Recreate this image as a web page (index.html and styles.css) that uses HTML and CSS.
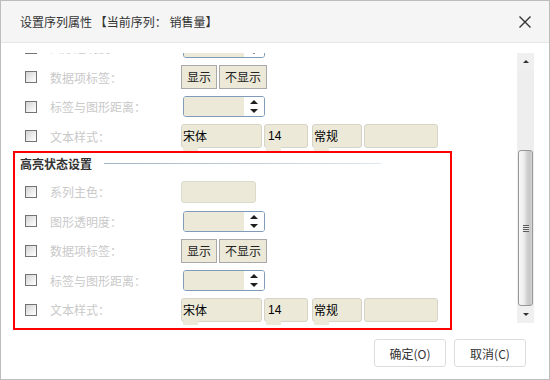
FILE: index.html
```html
<!DOCTYPE html>
<html lang="zh-CN">
<head>
    <meta charset="UTF-8">
    <title>设置序列属性</title>
    <link rel="stylesheet" href="styles.css">
</head>
<body>
    <div class="dialog">
        <div class="dlg-head">
            <span class="dlg-title">设置序列属性 【当前序列： 销售量】</span>
            <svg class="dlg-close" width="14" height="14" viewBox="0 0 14 14">
                <path d="M1.5 1.5 L12.5 12.5 M12.5 1.5 L1.5 12.5" stroke="#333" stroke-width="1.4" fill="none"/>
            </svg>
        </div>

        <div class="dlg-body">
            <div class="viewport">
                <div class="list">
                    <!-- riga tagliata in alto -->
                    <div class="row">
                        <span class="chk"></span>
                        <span class="lbl">图形透明度：</span>
                        <div class="spin"><span class="spin-val"></span><span class="spin-btn"><i class="up"></i><i class="down"></i></span></div>
                    </div>
                    <div class="row">
                        <span class="chk"></span>
                        <span class="lbl">数据项标签：</span>
                        <div class="btns"><span class="tbtn">显示</span><span class="tbtn">不显示</span></div>
                    </div>
                    <div class="row">
                        <span class="chk"></span>
                        <span class="lbl">标签与图形距离：</span>
                        <div class="spin"><span class="spin-val"></span><span class="spin-btn"><i class="up"></i><i class="down"></i></span></div>
                    </div>
                    <div class="row">
                        <span class="chk"></span>
                        <span class="lbl">文本样式：</span>
                        <div class="fonts">
                            <span class="fld f-name tab">宋体</span>
                            <span class="fld f-size tab">14</span>
                            <span class="fld f-style tab">常规</span>
                            <span class="fld f-color"></span>
                        </div>
                    </div>

                    <div class="hl">
                        <div class="hl-title"><span>高亮状态设置</span><i class="hl-line"></i></div>
                        <div class="row">
                            <span class="chk"></span>
                            <span class="lbl">系列主色：</span>
                            <span class="swatch"></span>
                        </div>
                        <div class="row">
                            <span class="chk"></span>
                            <span class="lbl">图形透明度：</span>
                            <div class="spin"><span class="spin-val"></span><span class="spin-btn"><i class="up"></i><i class="down"></i></span></div>
                        </div>
                        <div class="row">
                            <span class="chk"></span>
                            <span class="lbl">数据项标签：</span>
                            <div class="btns"><span class="tbtn">显示</span><span class="tbtn">不显示</span></div>
                        </div>
                        <div class="row">
                            <span class="chk"></span>
                            <span class="lbl">标签与图形距离：</span>
                            <div class="spin"><span class="spin-val"></span><span class="spin-btn"><i class="up"></i><i class="down"></i></span></div>
                        </div>
                        <div class="row">
                            <span class="chk"></span>
                            <span class="lbl">文本样式：</span>
                            <div class="fonts">
                                <span class="fld f-name tab">宋体</span>
                                <span class="fld f-size tab">14</span>
                                <span class="fld f-style tab">常规</span>
                                <span class="fld f-color"></span>
                            </div>
                        </div>
                    </div>
                </div>
            </div>

            <div class="vscroll">
                <div class="sb-arrow"><i class="up"></i></div>
                <div class="sb-track">
                    <div class="sb-thumb"><span class="grip"></span></div>
                </div>
                <div class="sb-arrow"><i class="down"></i></div>
            </div>
        </div>

        <div class="dlg-foot">
            <button class="btn">确定(O)</button>
            <button class="btn">取消(C)</button>
        </div>
    </div>
</body>
</html>
```

FILE: styles.css
```css
html, body {
    margin: 0;
    padding: 0;
    background: #fff;
}
body {
    font-family: "Noto Sans CJK SC", "Liberation Sans", sans-serif;
    font-size: 12px;
    color: #333;
}
.dialog {
    width: 550px;
    height: 380px;
    box-sizing: border-box;
    border: 1px solid #bdbdbd;
    display: flex;
    flex-direction: column;
    background: #fff;
}
.dlg-head {
    height: 41px;
    border-bottom: 1px solid #e6e6e6;
    background: #f5f5f5;
    display: flex;
    align-items: center;
    justify-content: space-between;
    padding: 0 17px 0 19px;
    flex-shrink: 0;
}
.dlg-title {
    font-size: 12px;
    color: #333;
}
.dlg-body {
    height: 288px;
    box-sizing: border-box;
    padding-top: 10px;
    display: flex;
    flex-shrink: 0;
}
.viewport {
    flex: 1;
    height: 278px;
    overflow: hidden;
}
.list {
    margin-top: -20px;
    padding-left: 12px;
}
.row {
    height: 29.5px;
    display: flex;
    align-items: center;
    padding-left: 12px;
}
.chk {
    width: 12px;
    height: 12px;
    box-sizing: border-box;
    border: 1px solid #737373;
    background: linear-gradient(135deg, #d2d2d2, #f4f4f4 70%, #fff);
    margin-right: 13px;
    flex-shrink: 0;
}
.lbl {
    width: 131px;
    color: #c9c9c9;
    flex-shrink: 0;
    white-space: nowrap;
}
.spin {
    width: 82px;
    height: 21px;
    box-sizing: border-box;
    margin-left: 2px;
    border: 1px solid #7f9db9;
    border-radius: 3px;
    display: flex;
    overflow: hidden;
}
.spin-val {
    flex: 1;
    background: #ece9d8;
}
.spin-btn {
    width: 20px;
    background: #fff;
    display: flex;
    flex-direction: column;
    align-items: center;
    padding-top: 3px;
    box-sizing: border-box;
}
i.up, i.down {
    display: block;
    width: 0;
    height: 0;
    border-left: 4px solid transparent;
    border-right: 4px solid transparent;
}
i.up {
    border-bottom: 4px solid #1d1d1d;
}
i.down {
    border-top: 4px solid #1d1d1d;
}
.spin-btn i.down {
    margin-top: 5px;
}
.btns {
    display: flex;
    gap: 2px;
}
.tbtn {
    height: 24px;
    box-sizing: border-box;
    border: 1px solid #a9a9a9;
    background: #ece9d8;
    padding: 0 5px;
    line-height: 22px;
    color: #222;
}
.fonts {
    display: flex;
}
.fld {
    height: 24px;
    box-sizing: border-box;
    border: 1px solid #d6d3c7;
    border-radius: 3px;
    background: #ece9d8;
    line-height: 22px;
    padding-left: 1px;
    color: #000;
    position: relative;
}
.fld.tab::after {
    content: "";
    position: absolute;
    left: 1px;
    bottom: -4px;
    width: 15px;
    height: 4px;
    background: #ece9d8;
}
.f-name { width: 81px; }
.f-size {
    width: 44px;
    margin-left: 2px;
    font-family: "Liberation Sans", sans-serif;
    padding-left: 3px;
}
.f-style { width: 50px; margin-left: 4px; }
.f-color { width: 74px; margin-left: 2px; }
.swatch {
    width: 75px;
    height: 22px;
    box-sizing: border-box;
    border: 1px solid #dcd9cd;
    border-radius: 3px;
    background: #ece9d8;
}
.hl {
    width: 439px;
    box-sizing: border-box;
    border: 2px solid #f00;
    padding-bottom: 3px;
}
.hl .row {
    padding-left: 10px;
}
.hl-title {
    height: 20px;
    margin-bottom: 4px;
    padding-left: 5px;
    display: flex;
    align-items: center;
    font-weight: bold;
    color: #333;
}
.hl-line {
    display: block;
    width: 277px;
    height: 1px;
    margin-left: 12px;
    background: linear-gradient(to right, #9fb4c6, #dfe7ee);
}
.vscroll {
    width: 17px;
    height: 270px;
    margin-right: 15px;
    background: #eeeeee;
    display: flex;
    flex-direction: column;
}
.sb-arrow {
    height: 17px;
    display: flex;
    align-items: center;
    justify-content: center;
    background: #f0f0f0;
}
.sb-arrow i.up, .sb-arrow i.down {
    border-left-width: 3px;
    border-right-width: 3px;
}
.sb-arrow i.up { border-bottom: 3px solid #333; }
.sb-arrow i.down { border-top: 3px solid #333; }
.sb-track {
    flex: 1;
    display: flex;
    flex-direction: column;
    justify-content: flex-end;
    padding: 0 1px;
}
.sb-thumb {
    height: 156px;
    box-sizing: border-box;
    border: 1px solid #989898;
    border-radius: 3px;
    background: linear-gradient(to right, #f8f8f8 0%, #ececec 40%, #d2d2d2 60%, #c6c6c6 85%, #d9d9d9 100%);
    display: flex;
    align-items: center;
    justify-content: center;
}
.grip {
    width: 6px;
    height: 7px;
    background: repeating-linear-gradient(to bottom, #5a5a5a 0, #5a5a5a 1px, #e8e8e8 1px, #e8e8e8 2px);
}
.dlg-foot {
    flex: 1;
    display: flex;
    justify-content: flex-end;
    align-items: flex-start;
    gap: 8px;
    padding: 8px 23px 0 0;
}
.btn {
    width: 72px;
    height: 28px;
    border: 1px solid #dcdcdc;
    border-radius: 3px;
    background: #fff;
    font-family: "Noto Sans CJK SC", "Liberation Sans", sans-serif;
    font-size: 12px;
    color: #333;
    padding: 0;
}
```
